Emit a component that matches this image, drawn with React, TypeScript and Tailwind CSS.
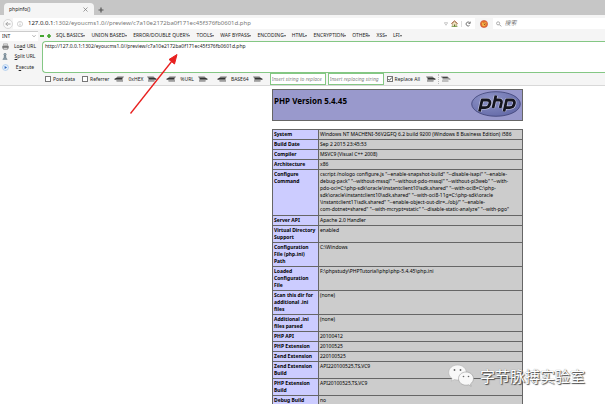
import React from "react";

const UI = "font-['Noto_Sans','Noto_Sans_CJK_SC',sans-serif]";

const menus = ["SQL BASICS", "UNION BASED", "ERROR/DOUBLE QUERY", "TOOLS", "WAF BYPASS", "ENCODING", "HTML", "ENCRYPTION", "OTHER", "XSS", "LFI"];

const rows: [string, string][] = [
  ["System", "Windows NT MACHENI-56V2GFQ 6.2 build 9200 (Windows 8 Business Edition) i586"],
  ["Build Date", "Sep 2 2015 23:45:53"],
  ["Compiler", "MSVC9 (Visual C++ 2008)"],
  ["Architecture", "x86"],
  [
    "Configure\nCommand",
    'cscript /nologo configure.js "--enable-snapshot-build" "--disable-isapi" "--enable-\ndebug-pack" "--without-mssql" "--without-pdo-mssql" "--without-pi3web" "--with-\npdo-oci=C:\\php-sdk\\oracle\\instantclient10\\sdk,shared" "--with-oci8=C:\\php-\nsdk\\oracle\\instantclient10\\sdk,shared" "--with-oci8-11g=C:\\php-sdk\\oracle\n\\instantclient11\\sdk,shared" "--enable-object-out-dir=../obj/" "--enable-\ncom-dotnet=shared" "--with-mcrypt=static" "--disable-static-analyze" "--with-pgo"',
  ],
  ["Server API", "Apache 2.0 Handler"],
  ["Virtual Directory\nSupport", "enabled"],
  ["Configuration\nFile (php.ini)\nPath", "C:\\Windows"],
  ["Loaded\nConfiguration\nFile", "F:\\phpstudy\\PHPTutorial\\php\\php-5.4.45\\php.ini"],
  ["Scan this dir for\nadditional .ini\nfiles", "(none)"],
  ["Additional .ini\nfiles parsed", "(none)"],
  ["PHP API", "20100412"],
  ["PHP Extension", "20100525"],
  ["Zend Extension", "220100525"],
  ["Zend Extension\nBuild", "API220100525,TS,VC9"],
  ["PHP Extension\nBuild", "API20100525,TS,VC9"],
  ["Debug Build", "no"],
];

function Hand({ flip = false, light = false }: { flip?: boolean; light?: boolean }) {
  return (
    <svg viewBox="0 0 10 6" className={flip ? "h-1.5 w-2.5 -scale-x-100" : "h-1.5 w-2.5"} aria-hidden="true">
      <path d="M0 .5h6.500L8 2H1z" fill="#777" />
      <path d="M1.500 2H8l1.500.8v1H1.500z" fill={light ? "#999" : "#333"} />
      <path d="M1 3.800h7v.7H1z" fill={light ? "#fff" : "#bbb"} />
      <path d="M1 4.500h6.500v1H1z" fill={light ? "#888" : "#666"} />
      {light && <path d="M2 1h4.500v1H2z" fill="#444" />}
    </svg>
  );
}

function Codec({ label }: { label: string }) {
  return (
    <div className="flex items-center gap-1">
      <button aria-label={`Decode ${label}`}><Hand flip /></button>
      <span>{label}</span>
      <button aria-label={`Encode ${label}`}><Hand /></button>
    </div>
  );
}

function Check({ label, checked = false }: { label: string; checked?: boolean }) {
  return (
    <label className="flex items-center gap-0.5">
      <span className="grid">
        <input type="checkbox" defaultChecked={checked} className="peer col-start-1 row-start-1 size-1.5 appearance-none border border-[#777] bg-white" />
        <svg viewBox="0 0 6 6" className="pointer-events-none col-start-1 row-start-1 hidden size-1.5 peer-checked:block" aria-hidden="true">
          <path d="M1.300 3l1.200 1.300L4.800 1.500" fill="none" stroke="#222" strokeWidth=".8" />
        </svg>
      </span>
      <span>{label}</span>
    </label>
  );
}

function TabStrip() {
  return (
    <div className="flex h-[15px] items-end bg-[#c6c6c6]">
      <div className="ml-1 flex h-3 w-[90px] items-center justify-between rounded-t-sm bg-[#f5f5f5] pr-1.5 pl-[5px]">
        <span>phpinfo()</span>
        <button aria-label="Close tab">
          <svg viewBox="0 0 5 5" className="size-[5px]"><path d="M.5.5l4 4M4.500.5l-4 4" stroke="#777" strokeWidth=".7" /></svg>
        </button>
      </div>
      <button aria-label="New tab" className="ml-1 pb-0.5">
        <svg viewBox="0 0 6 6" className="size-1.5"><path d="M3 .5v5M.5 3h5" stroke="#555" strokeWidth="1.200" /></svg>
      </button>
    </div>
  );
}

function NavBar() {
  return (
    <div className="flex h-[15px] items-center bg-[#f5f5f5] pt-0.5">
      <button aria-label="Back" className="ml-[3px]">
        <svg viewBox="0 0 10 10" className="size-2.5">
          <circle cx="5" cy="5" r="4.500" fill="#fafafa" stroke="#c4c4c4" strokeWidth=".6" />
          <path d="M7.500 5H2.800M4.800 3l-2 2 2 2" fill="none" stroke="#999" strokeWidth=".9" />
        </svg>
      </button>
      <div className="flex h-[11px] flex-1 items-center bg-white pl-1">
        <svg viewBox="0 0 6 6" className="size-1.5" aria-hidden="true">
          <circle cx="3" cy="3" r="2.600" fill="none" stroke="#aaa" strokeWidth=".5" />
          <path d="M3 2.600v2M3 1.400v.6" stroke="#999" strokeWidth=".6" />
        </svg>
        <div className="ml-[5px] flex-1 text-[6px] text-[#777]"><span className="text-[#222]">127.0.0.1</span>:1302/eyoucms1.0//preview/c7a10e2172ba0f171ec45f376fb0601d.php</div>
        <svg viewBox="0 0 4 4" className="size-1" aria-hidden="true"><path d="M.3.700h3.400L2 3.300z" fill="none" stroke="#999" strokeWidth=".5" /></svg>
        <button aria-label="Home" className="ml-[3px]">
          <svg viewBox="0 0 7 7" className="size-[7px]">
            <path d="M1.300 3.500v3h4.400v-3L3.500 1.500z" fill="#efe0bd" stroke="#8c7147" strokeWidth=".5" />
            <path d="M.3 3.700L3.500.800l3.200 2.900" fill="none" stroke="#a65f35" strokeWidth=".9" />
            <path d="M3 4.500h1.200v2H3z" fill="#56722f" /><path d="M.5 6.500h6" stroke="#64a33e" strokeWidth=".6" />
          </svg>
        </button>
        <button aria-label="Reload" className="ml-[3px] border-l border-[#ddd] pr-1 pl-[3px]">
          <svg viewBox="0 0 6 6" className="size-1.5"><path d="M4.600 4.300a2 2 0 1 1 0-2.600M5.200.600v1.800H3.400" fill="none" stroke="#666" strokeWidth=".9" /></svg>
        </button>
      </div>
      <button aria-label="Add-on" className="mx-[5px]">
        <svg viewBox="0 0 8 8" className="size-2">
          <circle cx="4" cy="4" r="3.600" fill="#e2712c" stroke="#cf4a3b" strokeWidth=".6" />
          <path d="M1.700 2l1.500 1 2-.6 1.200-.5-.3 2.800-1.600 1.500-2-.2z" fill="#f5b84c" /><path d="M3 3.600l1.300.500L5.700 3 5 5.200z" fill="#8e3018" />
        </svg>
      </button>
      <label className="flex h-[11px] w-[112px] items-center gap-[3px] bg-white pl-[3px]">
        <svg viewBox="0 0 6 6" className="size-1.5" aria-hidden="true"><circle cx="2.300" cy="2.300" r="1.700" fill="none" stroke="#888" strokeWidth=".7" /><path d="M3.600 3.600l2 2" stroke="#888" strokeWidth=".9" /></svg>
        <input aria-label="搜索" placeholder="搜索" className="w-full text-[6px] italic placeholder:text-[#777]" />
      </label>
    </div>
  );
}

function HackBar() {
  return (
    <div className="border-b border-[#d8d8d8] bg-[#f5f5f5]">
      <div className="flex h-[11px] items-center">
        <div className="grid w-[38px] items-center border-t border-[#ccc] bg-white">
          <select aria-label="Type" className="col-start-1 row-start-1 h-[9px] appearance-none pl-0.5"><option>INT</option></select>
          <svg viewBox="0 0 4 4" className="pointer-events-none col-start-1 row-start-1 mr-0.5 size-1 justify-self-end" aria-hidden="true"><path d="M.4 1.200L2 2.800l1.600-1.600" fill="none" stroke="#777" strokeWidth=".6" /></svg>
        </div>
        <button aria-label="Remove" className="ml-0.5 h-0.5 w-1 bg-[#42a42e]" />
        <button aria-label="Add" className="ml-[3px]">
          <svg viewBox="0 0 4 4" className="size-1"><path d="M2 0v4M0 2h4" stroke="#42a42e" strokeWidth="1.700" /></svg>
        </button>
        <nav className="ml-[5px] flex gap-1.5">
          {menus.map((m) => (
            <button key={m} className="flex items-center whitespace-nowrap">{m}<span className="border-x-[1px] border-t-2 border-x-transparent border-t-[#555]" /></button>
          ))}
        </nav>
      </div>
      <div className="flex h-8">
        <div className="flex w-[42px] flex-col justify-around pl-0.5">
          <button className="flex items-center gap-1">
            <svg viewBox="0 0 7 7" className="size-[7px]"><path d="M1.500.8h4v2h-4z" fill="#ddd" stroke="#888" strokeWidth=".5" /><path d="M.3 2.800h6.400v2.700H.3z" fill="#777" /><path d="M1.500 4.500h4v2h-4z" fill="#ccc" stroke="#666" strokeWidth=".4" /></svg>
            <span className="w-6 whitespace-nowrap">Lo<u>a</u>d URL</span>
          </button>
          <button className="flex items-center gap-1">
            <svg viewBox="0 0 7 7" className="size-[7px]"><circle cx="3" cy="1.500" r="1.200" fill="#9aabb6" stroke="#596c78" strokeWidth=".5" /><path d="M2.200 2.700h1.600L4 4.500l1.200 2H.8l1.200-2z" fill="#8799a5" stroke="#596c78" strokeWidth=".4" /></svg>
            <span className="w-6 whitespace-nowrap"><u>S</u>plit URL</span>
          </button>
          <button className="flex items-center gap-1">
            <svg viewBox="0 0 7 7" className="size-[7px]"><circle cx="3.500" cy="3.500" r="3" fill="#e2eefb" stroke="#8ab4e5" strokeWidth=".5" /><path d="M2.600 1.900l2.500 1.600-2.500 1.600z" fill="#2864bd" /></svg>
            <span className="w-6 whitespace-nowrap">E<u>x</u>ecute</span>
          </button>
        </div>
        <textarea
          aria-label="URL"
          className="h-8 flex-1 resize-none overflow-hidden rounded-l-sm border border-r-0 border-[#84c784] bg-white px-0.5 pt-px text-[#222]"
          defaultValue="http://127.0.0.1:1302/eyoucms1.0//preview/c7a10e2172ba0f171ec45f376fb0601d.php"
        />
      </div>
      <div className="flex h-3 items-center pl-[45px] whitespace-nowrap">
        <Check label="Post data" />
        <span className="w-[7px]" />
        <Check label="Referrer" />
        <div className="ml-[5px] flex gap-[9px]">
          <Codec label="0xHEX" />
          <Codec label="%URL" />
          <Codec label="BASE64" />
        </div>
        <input aria-label="Insert string to replace" placeholder="Insert string to replace" className="ml-[7px] h-3 w-14 border border-[#84c784] bg-white px-px italic placeholder:text-[#888]" />
        <input aria-label="Insert replacing string" placeholder="Insert replacing string" className="mr-[3px] ml-0.5 h-3 w-14 border border-[#84c784] bg-white px-px italic placeholder:text-[#888]" />
        <Check label="Replace All" checked />
        <button aria-label="Replace" className="ml-1.5"><Hand /></button>
        <span className="mx-0.5 h-2.5 border-l border-dotted border-[#bbb]" />
        <button aria-label="Replace next"><Hand light /></button>
      </div>
    </div>
  );
}

function PhpLogo() {
  return (
    <svg viewBox="0 0 50 26" className="h-[26px] w-[50px]" role="img" aria-label="php">
      <defs>
        <radialGradient id="disc" cx=".35" cy=".3" r=".8"><stop offset="0" stopColor="#8f94c8" /><stop offset="1" stopColor="#6268a6" /></radialGradient>
      </defs>
      <ellipse cx="25" cy="13" rx="24.300" ry="12.300" fill="url(#disc)" stroke="#34386c" strokeWidth=".7" />
      <g fill="none" strokeLinejoin="round">
        <g stroke="#c8cae6" strokeWidth="4">
          <path d="M8.500 20.500l2.600-11.500h4.700q3.800 0 3 3.800-.8 3.800-4.600 3.800H10M22 17l2.900-12.500M23.800 9h4.200q2.900 0 2.400 2.700L29.200 17M33 20.500l2.600-11.500h4.700q3.800 0 3 3.800-.8 3.800-4.600 3.800H34.500" />
        </g>
        <g stroke="#15151f" strokeWidth="2.800">
          <path d="M8.500 20.500l2.600-11.500h4.700q3.800 0 3 3.800-.8 3.800-4.600 3.800H10M22 17l2.900-12.500M23.800 9h4.200q2.900 0 2.400 2.700L29.200 17M33 20.500l2.600-11.500h4.700q3.800 0 3 3.800-.8 3.800-4.600 3.800H34.500" />
        </g>
      </g>
    </svg>
  );
}

function PhpInfo() {
  return (
    <main className="w-[523px] pt-[3px] pl-[272px] text-black">
      <header className="flex h-8 justify-between border border-[#666] bg-[#9999cc] pt-px pr-px pl-px">
        <h1 className="pt-1 text-[8px] leading-3 font-bold">PHP Version 5.4.45</h1>
        <PhpLogo />
      </header>
      <table className="mt-2 w-full table-fixed border-collapse">
        <colgroup><col className="w-[46px]" /><col /></colgroup>
        <tbody>
          {rows.map(([k, v]) => (
            <tr key={k} className="align-top">
              <th scope="row" className="border border-[#666] bg-[#ccccff] p-px text-left font-bold whitespace-pre">{k}</th>
              <td className={v.includes("\n") ? "border border-[#666] bg-[#cccccc] p-px pb-0.5 whitespace-pre" : "border border-[#666] bg-[#cccccc] p-px whitespace-pre"}>{v}</td>
            </tr>
          ))}
        </tbody>
      </table>
    </main>
  );
}

function Watermark() {
  return (
    <div className="absolute right-5 bottom-4 flex items-center gap-1.5">
      <svg viewBox="0 0 26 24" className="h-6 w-[26px]" aria-hidden="true">
        <path d="M9.500 1C4.500 1 .7 4.300.7 8.500c0 2.500 1.300 4.600 3.400 6l-.8 2.700 3.100-1.600c1 .3 2 .4 3.100.4 5 0 8.800-3.300 8.800-7.500S14.500 1 9.500 1z" fill="#f8f8f8" stroke="#aaa" strokeWidth=".5" />
        <path d="M18 8c-4.200 0-7.500 3-7.500 6.600s3.300 6.600 7.500 6.600c.9 0 1.800-.1 2.600-.4l2.600 1.500-.7-2.400c1.800-1.200 3-3.200 3-5.300C25.500 11 22.200 8 18 8z" fill="#f8f8f8" stroke="#999" strokeWidth=".6" />
        <g fill="#666"><circle cx="6.500" cy="6" r=".9" /><circle cx="12.500" cy="6" r=".9" /><circle cx="15.500" cy="12.500" r=".8" /><circle cx="20.500" cy="12.500" r=".8" /></g>
      </svg>
      <span className="text-[15px] leading-5 text-white [text-shadow:1px_1px_1px_#444,0_0_1px_#777]">字节脉搏实验室</span>
    </div>
  );
}

export default function App() {
  return (
    <div className={`relative h-screen overflow-hidden bg-white text-[5px] leading-[7px] text-[#222] ${UI}`}>
      <TabStrip />
      <NavBar />
      <HackBar />
      <PhpInfo />
      <svg viewBox="0 0 50 62" className="absolute top-[53px] left-[129px] h-[62px] w-[50px]" aria-hidden="true">
        <path d="M1.500 60.500L43 8" stroke="#e8201f" strokeWidth="1.300" />
        <path d="M48 1.500l-2.500 9.500-5.500-4.500z" fill="#e8201f" stroke="#e8201f" />
      </svg>
      <Watermark />
    </div>
  );
}
